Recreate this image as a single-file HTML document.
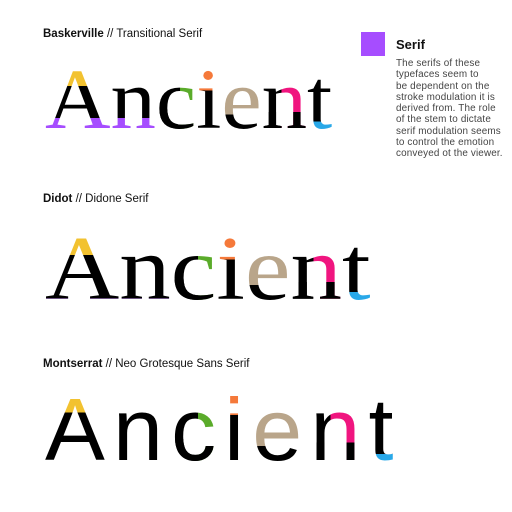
<!DOCTYPE html>
<html><head><meta charset="utf-8"><style>
body{margin:0;width:512px;height:512px;background:#fff;position:relative;overflow:hidden;font-family:"Liberation Sans",sans-serif}
.h{position:absolute;left:43px;font-size:11.5px;color:#111;white-space:nowrap}
.h b{font-weight:bold}
.w{position:absolute;left:45px;line-height:1;white-space:nowrap;transform-origin:0 0}
.w span{-webkit-background-clip:text !important;background-clip:text !important;color:transparent;-webkit-text-fill-color:transparent;display:inline-block}
.sq{position:absolute;left:361px;top:32px;width:24px;height:24px;background:#a64dff}
.st{position:absolute;left:396px;top:37px;font-size:13px;font-weight:bold;color:#111}
.p{position:absolute;left:396px;top:58px;font-size:9.9px;letter-spacing:0.15px;line-height:11.3px;color:#444;white-space:nowrap}
</style></head><body>
<div class="h" style="top:28px"><b>Baskerville</b> // Transitional Serif</div>
<div class="h" style="top:193px"><b>Didot</b> // Didone Serif</div>
<div class="h" style="top:358px"><b>Montserrat</b> // Neo Grotesque Sans Serif</div>
<div class="sq"></div>
<div class="st">Serif</div>
<div class="p">The serifs of these<br>typefaces seem to<br>be dependent on the<br>stroke modulation it is<br>derived from. The role<br>of the stem to dictate<br>serif modulation seems<br>to control the emotion<br>conveyed ot the viewer.</div>

<div class="w" style="top:56px;font-family:'Liberation Serif',serif;font-size:86px;transform:scaleX(1.055)">
<span style="background:linear-gradient(#f2c230 35%,#000 35%,#000 72%,#a64dff 72%)">A</span><span style="background:linear-gradient(#000 72%,#a64dff 72%)">n</span><span style="background:linear-gradient(to bottom,transparent 62%,#000 62%),linear-gradient(to right,#000 60%,#5aab2a 60%)">c</span><span style="background:linear-gradient(#f5793a 40%,#000 40%)">i</span><span style="background:linear-gradient(#b9a58a 68%,#000 68%)">e</span><span style="background:linear-gradient(to bottom,transparent 65%,#000 65%),linear-gradient(to right,#000 45%,#f0157f 45%)">n</span><span style="background:linear-gradient(#000 76%,#29a8e8 76%)">t</span>
</div>

<div class="w" style="top:223px;font-family:'Liberation Serif',serif;font-size:91px;transform:scaleX(1.13)">
<span style="background:linear-gradient(#f2c230 35%,#000 35%,#000 83%,#a64dff 83%)">A</span><span style="background:linear-gradient(#000 83%,#a64dff 83%)">n</span><span style="background:linear-gradient(to bottom,transparent 62%,#000 62%),linear-gradient(to right,#000 60%,#5aab2a 60%)">c</span><span style="background:linear-gradient(#f5793a 40%,#000 40%)">i</span><span style="background:linear-gradient(#b9a58a 68%,#000 68%)">e</span><span style="background:linear-gradient(to bottom,transparent 65%,#000 65%),linear-gradient(to right,#000 45%,#f0157f 45%)">n</span><span style="background:linear-gradient(#000 76%,#29a8e8 76%)">t</span>
</div>

<div class="w" style="top:386px;font-family:'Liberation Sans',sans-serif;font-size:88px;letter-spacing:8px;transform:scaleX(1.02)">
<span style="background:linear-gradient(#f2c230 30%,#000 30%)">A</span><span style="background:#000">n</span><span style="background:linear-gradient(to bottom,transparent 60%,#000 60%),linear-gradient(to right,#000 50%,#5aab2a 50%)">c</span><span style="background:linear-gradient(#f5793a 33%,#000 33%)">i</span><span style="background:linear-gradient(#b9a58a 68%,#000 68%)">e</span><span style="background:linear-gradient(to bottom,transparent 64%,#000 64%),linear-gradient(to right,#000 35%,#f0157f 35%)">n</span><span style="background:linear-gradient(#000 77%,#29a8e8 77%)">t</span>
</div>
</body></html>
